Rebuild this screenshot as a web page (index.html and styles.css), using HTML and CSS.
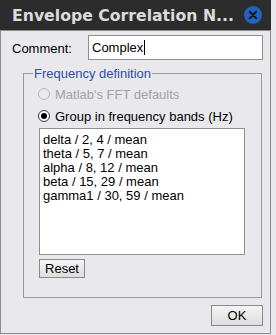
FILE: index.html
```html
<!DOCTYPE html>
<html>
<head>
<meta charset="utf-8">
<link rel="stylesheet" href="styles.css">
</head>
<body>
<div class="window">
  <div class="titlebar">
    <span class="title">Envelope Correlation N...</span>
    <span class="close"><svg width="18" height="18" viewBox="0 0 18 18"><circle cx="9" cy="9" r="9" fill="#1f63c4"/><path d="M5.8 5.8 L12.2 12.2 M12.2 5.8 L5.8 12.2" stroke="#1a1a1a" stroke-width="2.2" stroke-linecap="round"/></svg></span>
  </div>
  <div class="body">
    <div class="row-comment">
      <label class="lbl">Comment:</label>
      <div class="input">Complex<span class="caret"></span></div>
    </div>
    <fieldset class="group">
      <legend>Frequency definition</legend>
      <div class="radio disabled"><span class="dot"></span><span>Matlab's FFT defaults</span></div>
      <div class="radio"><span class="dot on"></span><span>Group in frequency bands (Hz)</span></div>
      <div class="textarea">delta / 2, 4 / mean<br>theta / 5, 7 / mean<br>alpha / 8, 12 / mean<br>beta / 15, 29 / mean<br>gamma1 / 30, 59 / mean</div>
      <button class="btn reset">Reset</button>
    </fieldset>
    <div class="footer"><button class="btn ok">OK</button></div>
  </div>
</div>
</body>
</html>
```
FILE: styles.css
```css
html, body { margin: 0; padding: 0; }
body {
  width: 276px; height: 335px; overflow: hidden;
  background: #e9e8ed;
  font-family: "Liberation Sans", Arial, sans-serif;
  font-size: 12px;
  color: #000;
}
.window {
  box-sizing: border-box;
  width: 271px; height: 334px;
  border: 1px solid #8c8c8c;
  border-top: none;
  background: #e9e8ed;
  display: flex; flex-direction: column;
}
.titlebar {
  height: 30px; background: #2c2c2c;
  margin: 0 -1px;
  display: flex; align-items: center; justify-content: space-between;
  padding: 0 9px 0 12px;
  border-bottom: 1px solid #8c8c8c;
  flex: none;
}
.title {
  font-family: "DejaVu Sans", sans-serif; font-weight: bold;
  font-size: 15.7px; color: #dcdcdc; white-space: nowrap;
}
.close { display: flex; }
.body { flex: 1; padding: 4px 7px 6px 11px; display: flex; flex-direction: column; }
.row-comment { display: flex; align-items: center; justify-content: space-between; }
.lbl { padding-top: 1px; font-size: 13px; }
.input {
  box-sizing: border-box; width: 175px; height: 25px;
  background: #fff; border: 1px solid #8f8f8f;
  font-size: 13px; padding: 3px 3px; display: flex; align-items: center;
}
.caret { display: inline-block; width: 1px; height: 15px; background: #000; margin-left: 1px; }
.group {
  margin: 6px 1px 0 11px; padding: 2px 16px 19px 15px;
  border: 1px solid #9a9a9a;
}
.group legend {
  color: #2e4fa3; padding: 0 1px; margin-left: -6px; font-size: 13px;
}
.radio { display: flex; align-items: center; gap: 5px; height: 22px; margin-left: -1px; font-size: 13px; }
.radio.disabled { color: #a3a3a3; }
.dot {
  box-sizing: border-box; width: 12px; height: 12px; border-radius: 50%;
  border: 1px solid #333; background: #fff; position: relative;
}
.radio.disabled .dot { border-color: #b8b8b8; background: #eceaef; }
.dot.on::after {
  content: ""; position: absolute; left: 2px; top: 2px; width: 6px; height: 6px;
  border-radius: 50%; background: #000;
}
.textarea {
  box-sizing: border-box; height: 127px; margin-top: 1px;
  background: #fff; border: 1px solid #8f8f8f;
  padding: 4px 3px; line-height: 14px; font-size: 13px;
}
.btn {
  font-family: "Liberation Sans", Arial, sans-serif; font-size: 13px;
  border: 1px solid #8a8a8a;
  background: linear-gradient(#f4f4f4, #dedede);
  padding: 0; color: #000;
}
.reset { width: 46px; height: 19px; margin-top: 4px; display: block; }
.footer { display: flex; justify-content: flex-end; margin-top: 7px; }
.ok { width: 52px; height: 21px; }
```
